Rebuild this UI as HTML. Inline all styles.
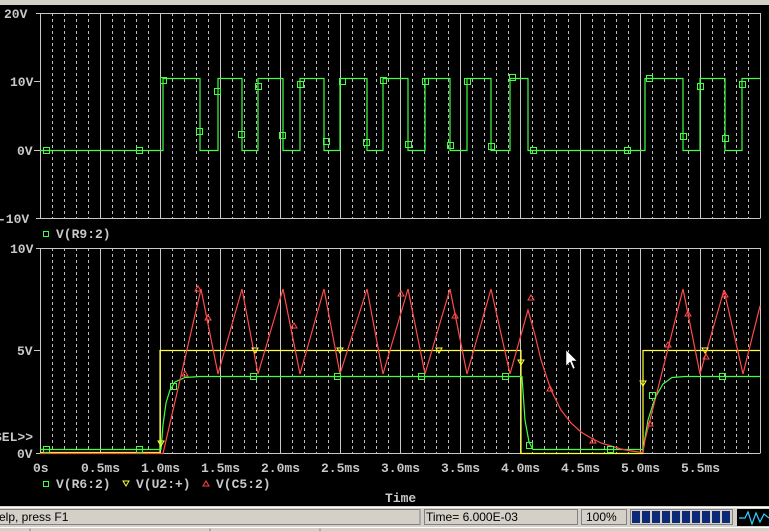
<!DOCTYPE html>
<html><head><meta charset="utf-8"><style>
html,body{margin:0;padding:0;width:769px;height:531px;overflow:hidden;background:#d4d0c8;}
svg{display:block}
.t{font-family:"Liberation Mono",monospace;font-size:13px;font-weight:bold;fill:#c8c8c8}
.s{font-family:"Liberation Sans",sans-serif;font-size:12px;fill:#000}
</style></head><body>
<svg width="769" height="531" viewBox="0 0 769 531" xmlns="http://www.w3.org/2000/svg">
<rect x="0" y="0" width="769" height="5" fill="#d4d0c8"/>
<rect x="0" y="5" width="769" height="501" fill="#000"/>
<defs>
<g id="grid">
<g stroke="#bdbdbd" stroke-width="1" stroke-dasharray="3,3">
<path d="M52.5 0V205M64.5 0V205M76.5 0V205M88.5 0V205M112.5 0V205M124.5 0V205M136.5 0V205M148.5 0V205M172.5 0V205M184.5 0V205M196.5 0V205M208.5 0V205M232.5 0V205M244.5 0V205M256.5 0V205M268.5 0V205M292.5 0V205M304.5 0V205M316.5 0V205M328.5 0V205M352.5 0V205M364.5 0V205M376.5 0V205M388.5 0V205M412.5 0V205M424.5 0V205M436.5 0V205M448.5 0V205M472.5 0V205M484.5 0V205M496.5 0V205M508.5 0V205M532.5 0V205M544.5 0V205M556.5 0V205M568.5 0V205M592.5 0V205M604.5 0V205M616.5 0V205M628.5 0V205M652.5 0V205M664.5 0V205M676.5 0V205M688.5 0V205M712.5 0V205M724.5 0V205M736.5 0V205M748.5 0V205"/>
</g>
<g stroke="#c8c8c8" stroke-width="1">
<path d="M40.5 0V205M100.5 0V205M160.5 0V205M220.5 0V205M280.5 0V205M340.5 0V205M400.5 0V205M460.5 0V205M520.5 0V205M580.5 0V205M640.5 0V205M700.5 0V205M760.5 0V205"/>
<path d="M36 0.5H760.5M36 205.5H760.5"/>
</g>
</g>
</defs>
<use href="#grid" x="0" y="13"/>
<use href="#grid" x="0" y="248"/>
<g stroke="#c8c8c8"><path d="M34 81.5H40M34 150.5H40M34 350.5H40"/></g>
<text class="t" x="4" y="18">20V</text>
<text class="t" x="10" y="86">10V</text>
<text class="t" x="17" y="155">0V</text>
<text class="t" x="-2" y="223">-10V</text>
<rect x="43.5" y="231.5" width="5" height="5" fill="none" stroke="#40ff40"/>
<text class="t" x="56" y="238">V(R9:2)</text>
<text class="t" x="10" y="253">10V</text>
<text class="t" x="17" y="355">5V</text>
<text class="t" x="-6" y="441">SEL&gt;&gt;</text>
<text class="t" x="17" y="458">0V</text>
<g class="t">
<text x="33" y="472">0s</text><text x="81" y="472">0.5ms</text><text x="141" y="472">1.0ms</text><text x="201" y="472">1.5ms</text><text x="261" y="472">2.0ms</text><text x="321" y="472">2.5ms</text><text x="381" y="472">3.0ms</text><text x="441" y="472">3.5ms</text><text x="501" y="472">4.0ms</text><text x="561" y="472">4.5ms</text><text x="621" y="472">5.0ms</text><text x="681" y="472">5.5ms</text>
<text x="56" y="488">V(R6:2)</text><text x="136" y="488">V(U2:+)</text><text x="216" y="488">V(C5:2)</text>
<text x="385" y="502">Time</text>
</g>
<rect x="43.5" y="481.5" width="5" height="5" fill="none" stroke="#40ff40"/>
<path d="M123 481L129 481L126 486Z" fill="none" stroke="#ffff40"/>
<path d="M203 486L209 486L206 481Z" fill="none" stroke="#ff4040"/>
<path fill="none" stroke="#40ff40" stroke-width="1.2" d="M40 150.5H163V78.5H200V150.5H218V78.5H242V150.5H258V78.5H283V150.5H300V78.5H324V150.5H340V78.5H367V150.5H383V78.5H408V150.5H425V78.5H450V150.5H467V78.5H491V150.5H510V78.5H528V150.5H645V78.5H683V150.5H700V78.5H725V150.5H742V78.5H760"/>
<g fill="none" stroke="#40ff40">
<rect x="43.5" y="147.5" width="6" height="6"/><rect x="136.5" y="147.5" width="6" height="6"/><rect x="160.5" y="77.5" width="6" height="6"/><rect x="196.5" y="128.5" width="6" height="6"/><rect x="214.5" y="88.5" width="6" height="6"/><rect x="238.5" y="131.5" width="6" height="6"/><rect x="255.5" y="83.5" width="6" height="6"/><rect x="279.5" y="132.5" width="6" height="6"/><rect x="297.5" y="81.5" width="6" height="6"/><rect x="323.5" y="138.5" width="6" height="6"/><rect x="339.5" y="78.5" width="6" height="6"/><rect x="363.5" y="139.5" width="6" height="6"/><rect x="380.5" y="77.5" width="6" height="6"/><rect x="405.5" y="141.5" width="6" height="6"/><rect x="422.5" y="78.5" width="6" height="6"/><rect x="447.5" y="142.5" width="6" height="6"/><rect x="464.5" y="78.5" width="6" height="6"/><rect x="488.5" y="143.5" width="6" height="6"/><rect x="509.5" y="74.5" width="6" height="6"/><rect x="530.5" y="147.5" width="6" height="6"/><rect x="624.5" y="147.5" width="6" height="6"/><rect x="646.5" y="75.5" width="6" height="6"/><rect x="680.5" y="133.5" width="6" height="6"/><rect x="697.5" y="83.5" width="6" height="6"/><rect x="722.5" y="135.5" width="6" height="6"/><rect x="739.5" y="81.5" width="6" height="6"/>
</g>
<path fill="none" stroke="#ffff30" stroke-width="1.2" d="M40 452.5H160V350.5H521V453.5H643V350.5H760"/>
<path fill="none" stroke="#40ff40" stroke-width="1.2" d="M40 449.5H161L163 425L166 403L170 390L175 382L185 377.5L200 376.5H522L525 420L529 442L533 449.5H643L648 420L655 398L663 384L672 377.5L685 376.5H760"/>
<path fill="none" stroke="#ff4a4a" stroke-width="1.2" d="M40 453.5H163L201 289L218 374L242 289L258 374L283 289L300 374L324 289L340 374L367 289L383 374L408 289L425 374L450 289L467 374L491 289L510 374L528 310L535 335L541 360L551 390L561 410L571 423L581 432L591 438L601 443L611 446L621 449L631 451L643 452.5L645 440L683 289L700 374L724 290L743 374L760 306"/>
<g fill="none" stroke="#40ff40">
<rect x="43.5" y="446.5" width="6" height="6"/><rect x="136.5" y="446.5" width="6" height="6"/><rect x="170.5" y="383.5" width="6" height="6"/><rect x="250.5" y="373.5" width="6" height="6"/><rect x="334.5" y="373.5" width="6" height="6"/><rect x="418.5" y="373.5" width="6" height="6"/><rect x="502.5" y="373.5" width="6" height="6"/><rect x="526.5" y="442.5" width="6" height="6"/><rect x="607.5" y="446.5" width="6" height="6"/><rect x="649.5" y="392.5" width="6" height="6"/><rect x="719.5" y="373.5" width="6" height="6"/>
</g>
<g fill="none" stroke="#ffff30">
<path d="M158 441h6l-3 5z"/><path d="M252 348h6l-3 5z"/><path d="M337 348h6l-3 5z"/><path d="M436 348h6l-3 5z"/><path d="M518 360h6l-3 5z"/><path d="M640 381h6l-3 5z"/><path d="M702 348h6l-3 5z"/>
</g>
<g fill="none" stroke="#ff4a4a">
<path d="M182 376h6l-3-5z"/><path d="M195 291h6l-3-5z"/><path d="M205 320h6l-3-5z"/><path d="M291 328h6l-3-5z"/><path d="M398 296h6l-3-5z"/><path d="M452 318h6l-3-5z"/><path d="M528 300h6l-3-5z"/><path d="M547 391h6l-3-5z"/><path d="M590 443h6l-3-5z"/><path d="M647 426h6l-3-5z"/><path d="M665 347h6l-3-5z"/><path d="M685 316h6l-3-5z"/><path d="M703 359h6l-3-5z"/><path d="M722 297h6l-3-5z"/>
</g>
<path d="M566 350V366L570 362L573 369L575 368L572 361L577 361Z" fill="#fff" stroke="#000" stroke-width="0.5"/>
<rect x="0" y="506" width="769" height="25" fill="#d4d0c8"/>
<path d="M0 507.5H769" stroke="#fff"/>
<rect x="-2" y="509.5" width="422" height="15" fill="none" stroke="#808080"/>
<text class="s" x="-1" y="521">elp, press F1</text>
<rect x="424.5" y="509.5" width="153" height="15" fill="none" stroke="#808080"/>
<text class="s" x="426" y="521">Time= 6.000E-03</text>
<rect x="581.5" y="509.5" width="45" height="15" fill="none" stroke="#808080"/>
<text class="s" x="586" y="521">100%</text>
<rect x="630.5" y="509.5" width="102" height="15" fill="none" stroke="#808080"/>
<g fill="#0c2a78">
<rect x="632" y="511" width="8" height="12"/><rect x="642" y="511" width="8" height="12"/><rect x="652" y="511" width="8" height="12"/><rect x="662" y="511" width="8" height="12"/><rect x="672" y="511" width="8" height="12"/><rect x="682" y="511" width="8" height="12"/><rect x="692" y="511" width="8" height="12"/><rect x="702" y="511" width="8" height="12"/><rect x="712" y="511" width="8" height="12"/><rect x="722" y="511" width="8" height="12"/>
</g>
<rect x="737" y="509" width="32" height="17" fill="#000"/>
<path d="M739 518H745L748 512L752 524L756 513L760 522L764 514L769 518" fill="none" stroke="#30d0ff" stroke-width="1.2"/>
<path d="M0 527.5H769" stroke="#fff"/>
<path d="M30 528.5V531M210 528.5V531M320 528.5V531" stroke="#808080"/>
</svg>
</body></html>
